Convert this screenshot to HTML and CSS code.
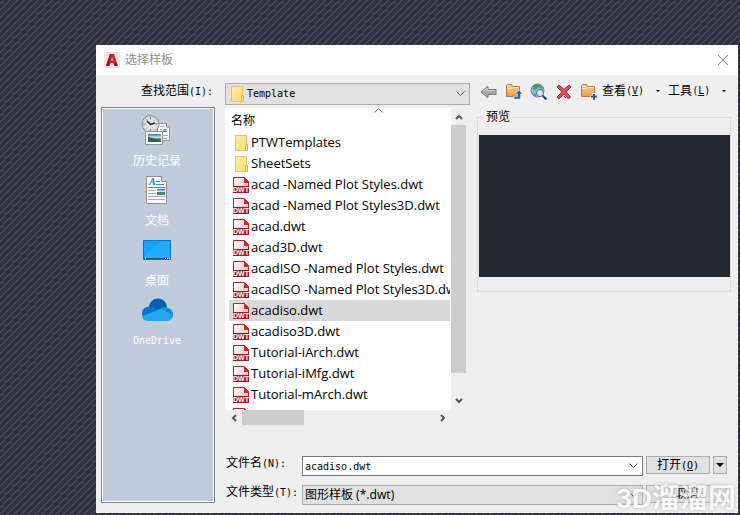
FILE: index.html
```html
<!DOCTYPE html>
<html lang="zh-CN">
<head>
<meta charset="utf-8">
<title>选择样板</title>
<link rel="stylesheet" href="styles.css">
</head>
<body>
<svg class="sprite" aria-hidden="true">
  <defs>
    <linearGradient id="page-red" x1="0" y1="0" x2="1" y2="1"><stop offset="0" stop-color="#fff"/><stop offset="1" stop-color="#f0b4b8"/></linearGradient>
    <linearGradient id="folder-yellow" x1="0" y1="0" x2="1" y2="1"><stop offset="0" stop-color="#ffeda8"/><stop offset="1" stop-color="#fbdc72"/></linearGradient>
    <linearGradient id="folder-orange" x1="0" y1="0" x2="0" y2="1"><stop offset="0" stop-color="#fbd49b"/><stop offset="1" stop-color="#e99a45"/></linearGradient>
    <linearGradient id="photo" x1="0" y1="0" x2="0" y2="1"><stop offset="0" stop-color="#2674c4"/><stop offset=".45" stop-color="#d5ebf5"/><stop offset=".6" stop-color="#47746b"/><stop offset="1" stop-color="#4a83ad"/></linearGradient>
    <symbol id="folder" viewBox="0 0 16 18">
      <path d="M2.500 1.500h11v9h1v6h-12z" fill="url(#folder-yellow)" stroke="#e9c65a"/>
      <path d="M12.500 16.500v-6h2v6z" fill="#ffe793" stroke="#e3b93c"/>
    </symbol>
    <symbol id="dwt" viewBox="0 0 16 16">
      <path d="M.500.500h11l4 4v11h-15z" fill="url(#page-red)" stroke="#a8272e"/>
      <path d="M11 0l5 5v1h-5z" fill="#d4242d"/>
      <path d="M0 9h16v7h-16z" fill="#9f1a22"/>
      <text x="8" y="15" text-anchor="middle" class="dwt-text">DWT</text>
    </symbol>
    <symbol id="folder-open" viewBox="0 0 17 17">
      <path d="M1.500 13.500v-11l1-1h4l1 2h7v10z" fill="url(#folder-orange)" stroke="#b9783a"/>
      <path d="M2 5.500h5l1-1h6" fill="none" stroke="#ffe2b6"/>
    </symbol>
  </defs>
</svg>

<main class="dialog">
  <header class="titlebar">
    <svg class="app-icon" viewBox="0 0 16 16" aria-hidden="true">
      <path d="M0 0h16v16H0z" fill="#f7e2dc"/>
      <path d="M2 14L6 2h4l4 12h-3.500l-1-3H6.500l-1 3z" fill="#c3262e"/>
      <path d="M7.200 8.500L8 5l1 3.500z" fill="#f7e2dc"/>
      <path d="M2 14L6 2h1L5.500 11l-1 3zM10.500 14l-1-3h2l2.500 3z" fill="#8e1820"/>
    </svg>
    <h1>选择样板</h1>
    <button class="close" aria-label="关闭"><svg viewBox="0 0 12 12"><path d="M1 1l10 10M11 1L1 11" stroke="#858585" fill="none"/></svg></button>
  </header>

  <div class="lookup">
    <label class="lookup-label" for="place">查找范围<span class="lat">(I):</span></label>
    <div class="combo folder-combo">
      <svg class="combo-icon"><use href="#folder"/></svg>
      <select id="place"><option>Template</option></select>
      <svg class="chev" viewBox="0 0 9 6"><path d="M.500.500l4 4 4-4" fill="none" stroke="#555"/></svg>
    </div>
    <nav class="tools" aria-label="工具栏">
      <button aria-label="后退"><svg viewBox="0 0 17 17"><path d="M1 9l7-6v3.500h8v5H8V15z" fill="#aaa" stroke="#787878"/><path d="M3 8.500l4-3.500v2.500h8" fill="none" stroke="#d3d3d3"/></svg></button>
      <button aria-label="上一级"><svg viewBox="0 0 17 17"><use href="#folder-open"/><path d="M9 16v-2.500h3.500V11H10l4-4 3.500 4H15.500v5z" fill="#2c5bc2" stroke="#fff" stroke-width=".5"/></svg></button>
      <button aria-label="搜索 Web"><svg viewBox="0 0 17 17"><circle cx="7.500" cy="7.500" r="6.500" fill="#8ab8e8" stroke="#6186c0"/><path d="M3 3q3-3 7-1l1 3-3-1-2 3-3-1zM10 2l3 3-1 2-2-2zM3 10l3 1v3z" fill="#4f9c58"/><circle cx="10" cy="10" r="3.500" fill="#d9ecf9" stroke="#416b9f"/><path d="M12.500 12.500l4 4" stroke="#1c3e78" stroke-width="2"/></svg></button>
      <button aria-label="删除"><svg viewBox="0 0 17 17"><path d="M2 4l2-2 5 4.500L14 2l2 2-5 5 4.500 5-2 2L9 11l-5 5-2-2 5-5z" fill="#d35359" stroke="#a52730"/><path d="M9 13l2 2" stroke="#f0f"/></svg></button>
      <button aria-label="新建文件夹"><svg viewBox="0 0 17 17"><use href="#folder-open"/><path d="M14 10v7M10.500 13.500h7" stroke="#fff" stroke-width="3"/><path d="M14 11v6M11 13.500h6" stroke="#2b55bd" stroke-width="2"/></svg></button>
    </nav>
    <button class="menu">查看<span class="lat">(<u>V</u>)</span><i class="caret"></i></button>
    <button class="menu">工具<span class="lat">(<u>L</u>)</span><i class="caret"></i></button>
  </div>

  <div class="content">
    <nav class="places" aria-label="位置">
      <a href="#history">
        <svg viewBox="0 0 32 32"><path d="M16.500 9.500h9l3 3v14h-12z" fill="#f8fbfc" stroke="#929292"/><path d="M25.500 9v4h3" fill="#ddd" stroke="#888"/><path d="M19 12.500h4M19 15.500h2M19 18.500h2M22 21.500h5M22 24.500h4" stroke="#aaa"/><path d="M22 15h4v3h-4z" fill="url(#photo)"/><circle cx="9.500" cy="10" r="8.500" fill="#d5d7d6" stroke="#8e9293"/><circle cx="9.500" cy="10" r="6.500" fill="#e4e5e3"/><path d="M9.500 3v2M9.500 15v2M2.500 10h2M14.500 10h2M5 5.500l1 1M14 5.500l-1 1M5 14.500l1-1" stroke="#777"/><path d="M6 7l3.500 3.500L14 9" fill="none" stroke="#222" stroke-width="1.500"/><path d="M4.500 17.500h17v13h-17z" fill="#fff" stroke="#949494"/><path d="M7 20h13v8H7z" fill="url(#photo)"/><path d="M7 23l5 1 8 3v1H7z" fill="#36644b"/></svg>
        <span>历史记录</span></a>
      <a href="#documents">
        <svg viewBox="0 0 32 32"><path d="M5.500 2.500h15l5 5v22h-20z" fill="#fafcfc" stroke="#8e9294"/><path d="M20.500 2.500v5h5" fill="#ddd" stroke="#8b8b8b"/><path d="M7 13.500h17M15 7.500h4M15 10.500h8" stroke="#2196d3"/><text x="8" y="11" class="doc-letter">A</text><path d="M7 16.500h8M7 19.500h8M7 22.500h17M7 25.500h17" stroke="#aaa"/><path d="M16 15h8v6h-8z" fill="url(#photo)"/></svg>
        <span>文档</span></a>
      <a href="#desktop">
        <svg viewBox="0 0 32 32"><path d="M2.500 6.500h27v19h-27z" fill="#13a2ff" stroke="#0873b5"/><path d="M3 22L20 7h9v17H3z" fill="#2cb1ff" opacity=".6"/><path d="M3 24.500h26" stroke="#075e9b"/><path d="M4 24.500h1M24 24.500h1M26 24.500h1M28 24.500h1" stroke="#fff"/></svg>
        <span>桌面</span></a>
      <a href="#onedrive">
        <svg viewBox="0 0 32 32"><path d="M8 14a9 9 0 0 1 18-1l-7 7z" fill="#0561b3"/><path d="M3 24a7 7 0 0 1-2-6q1-6 11-5l11 7-10 6z" fill="#0775d1"/><path d="M19 17q3-6 8-3a6.500 6.500 0 0 1 4 10l-13-6z" fill="#168bdc"/><path d="M1 22.500L20 14.500 31.500 21.500A6 6 0 0 1 26 27H8Q2 27 1 22.500z" fill="#28a5e9"/></svg>
        <span class="lat">OneDrive</span></a>
    </nav>

    <div class="workspace">
      <div class="panes">
        <section class="browser" aria-label="文件">
          <div class="files">
            <svg class="sort" viewBox="0 0 9 5"><path d="M.500 4.500l4-4 4 4" fill="none" stroke="#777"/></svg>
            <table>
              <thead><tr><th>名称</th></tr></thead>
              <tbody>
                <tr><td><svg><use href="#folder"/></svg>PTWTemplates</td></tr>
                <tr><td><svg><use href="#folder"/></svg>SheetSets</td></tr>
                <tr><td><svg><use href="#dwt"/></svg>acad -Named Plot Styles.dwt</td></tr>
                <tr><td><svg><use href="#dwt"/></svg>acad -Named Plot Styles3D.dwt</td></tr>
                <tr><td><svg><use href="#dwt"/></svg>acad.dwt</td></tr>
                <tr><td><svg><use href="#dwt"/></svg>acad3D.dwt</td></tr>
                <tr><td><svg><use href="#dwt"/></svg>acadISO -Named Plot Styles.dwt</td></tr>
                <tr><td><svg><use href="#dwt"/></svg>acadISO -Named Plot Styles3D.dwt</td></tr>
                <tr class="selected"><td><svg><use href="#dwt"/></svg>acadiso.dwt</td></tr>
                <tr><td><svg><use href="#dwt"/></svg>acadiso3D.dwt</td></tr>
                <tr><td><svg><use href="#dwt"/></svg>Tutorial-iArch.dwt</td></tr>
                <tr><td><svg><use href="#dwt"/></svg>Tutorial-iMfg.dwt</td></tr>
                <tr><td><svg><use href="#dwt"/></svg>Tutorial-mArch.dwt</td></tr>
                <tr><td><svg><use href="#dwt"/></svg></td></tr>
              </tbody>
            </table>
          </div>
          <div class="vbar">
            <button aria-label="向上滚动"><svg viewBox="0 0 8 6"><path d="M1 5l3-3 3 3" fill="none" stroke="#555" stroke-width="2"/></svg></button>
            <i class="thumb"></i>
            <button aria-label="向下滚动"><svg viewBox="0 0 8 6"><path d="M1 1l3 3 3-3" fill="none" stroke="#555" stroke-width="2"/></svg></button>
          </div>
          <div class="hbar">
            <button aria-label="向左滚动"><svg viewBox="0 0 6 8"><path d="M5 1L2 4l3 3" fill="none" stroke="#555" stroke-width="2"/></svg></button>
            <i class="thumb"></i>
            <button aria-label="向右滚动"><svg viewBox="0 0 6 8"><path d="M1 1l3 3-3 3" fill="none" stroke="#555" stroke-width="2"/></svg></button>
          </div>
        </section>
        <fieldset class="preview">
          <legend>预览</legend>
          <div class="canvas"></div>
        </fieldset>
      </div>

      <form class="fields">
        <label for="name">文件名<span class="lat">(N):</span></label>
        <div class="combo name-combo">
          <input id="name" type="text" value="acadiso.dwt">
          <svg class="chev" viewBox="0 0 9 6"><path d="M.500.500l4 4 4-4" fill="none" stroke="#555"/></svg>
        </div>
        <div class="actions">
          <button type="button" class="push open">打开<span class="lat">(<u>O</u>)</span></button>
          <button type="button" class="push split" aria-label="打开选项"><svg viewBox="0 0 8 4"><path d="M0 0h8L4 4z"/></svg></button>
        </div>
        <label for="type">文件类型<span class="lat">(T):</span></label>
        <div class="combo type-combo">
          <select id="type"><option>图形样板 (*.dwt)</option></select>
          <svg class="chev" viewBox="0 0 9 6"><path d="M.500.500l4 4 4-4" fill="none" stroke="#555"/></svg>
        </div>
        <button type="button" class="push cancel">取消</button>
      </form>
    </div>
  </div>
</main>
<div class="watermark">3D溜溜网</div>
</body>
</html>
```
FILE: styles.css
```css
* { box-sizing: border-box; }

body {
  margin: 0;
  min-height: 100vh;
  padding: 45px 2px 2px 96px;
  background: #2b313f linear-gradient(135deg, transparent 19%, #444a59 19%, #444a59 31%, transparent 31%, transparent 69%, #444a59 69%, #444a59 81%, transparent 81%) 0 0 / 7px 7px;
  color: #000;
  font: 12px/14px "Liberation Sans", "Noto Sans CJK SC", sans-serif;
}

button, input, select { font: inherit; color: inherit; border-radius: 0; margin: 0; }
button { padding: 0; border: 0; background: none; }
svg { display: block; flex: none; }
.sprite { position: absolute; width: 0; height: 0; }
.lat { font-family: "DejaVu Sans Mono", monospace; font-size: 10px; }
.dwt-text { font: bold 7px "Liberation Sans", sans-serif; fill: #fff; }
.doc-letter { font: italic bold 10px "Liberation Serif", serif; fill: #1687c9; }

.dialog { background: #efefef; }

.titlebar { display: flex; align-items: center; height: 30px; padding: 0 9px 0 8px; background: #fff; }
.titlebar h1 { flex: 1; margin: 0 0 0 5px; font-size: 12px; font-weight: 400; color: #8c8c8c; }
.app-icon { width: 16px; height: 16px; }
.close svg { width: 12px; height: 12px; }

.lookup { display: flex; align-items: center; height: 32px; padding-right: 10px; }
.lookup-label { width: 117px; text-align: right; }

.combo { position: relative; display: flex; align-items: center; height: 20px; border: 1px solid #adadad; background: #e1e1e1; }
.combo select, .combo input {
  width: 100%;
  height: 100%;
  padding: 0 20px 0 2px;
  border: 0;
  outline: 0;
  background: transparent;
  appearance: none;
  font-family: "DejaVu Sans Mono", "Noto Sans CJK SC", monospace;
  font-size: 10px;
}
.chev { position: absolute; right: 4px; width: 9px; height: 6px; pointer-events: none; }
.folder-combo { width: 245px; height: 22px; margin: 5px 0 0 12px; }
.combo-icon { width: 16px; height: 18px; margin-left: 3px; }
.name-combo { border-color: #7a7a7a; background: #fff; }
.type-combo select { font-size: 12px; font-family: "Noto Sans", "Noto Sans CJK SC", sans-serif; }

.tools { display: flex; gap: 8px; margin-left: 10px; }
.tools svg { width: 17px; height: 17px; }
.menu { display: flex; align-items: center; white-space: nowrap; margin-left: 5px; }
.menu + .menu { margin-left: 8px; }
.caret { width: 4px; margin-left: 12px; border: 2px solid transparent; border-top-color: #000; border-bottom: 0; }

.content { display: flex; padding: 0 7px 8px 5px; }

.places { width: 114px; margin-bottom: 2px; padding: 4px 2px 0 0; border: 1px solid #7f8791; outline: 1px solid #fff; outline-offset: -2px; background: #bfcddb; }
.places a { display: flex; flex-direction: column; align-items: center; height: 60px; padding-top: 2px; gap: 8px; color: #fff; text-decoration: none; }
.places svg { width: 32px; height: 32px; }

.workspace { flex: 1; min-width: 0; margin-left: 10px; }
.panes { display: flex; gap: 11px; }

.browser { display: grid; grid-template-columns: 226px 15px; grid-template-rows: 302px 15px; flex: none; padding-top: 1px; }
.files { position: relative; overflow: hidden; padding: 1px 1px 0 4px; background: #fff; }
.sort { position: absolute; left: 149px; top: 0; width: 9px; height: 5px; }
.files table { width: 100%; table-layout: fixed; border-collapse: collapse; font: 13px/21px "Open Sans", "Noto Sans CJK SC", sans-serif; }
.files th { height: 23px; padding: 0 2px; text-align: left; font-size: 12px; line-height: 20px; font-weight: 400; }
.files td { display: flex; align-items: center; height: 21px; padding: 0 0 0 4px; gap: 2px; white-space: nowrap; overflow: hidden; }
.files td svg { width: 16px; height: 18px; }
.selected { background: #d9d9d9; }

.vbar { display: flex; flex-direction: column; }
.vbar button { display: grid; place-items: center; height: 17px; }
.vbar svg { width: 8px; height: 6px; }
.vbar .thumb { height: 248px; margin-bottom: 19px; background: #cdcdcd; }
.hbar { display: flex; }
.hbar button { display: grid; place-items: center; width: 17px; }
.hbar svg { width: 6px; height: 8px; }
.hbar .thumb { width: 62px; margin-right: auto; background: #cdcdcd; }

.preview { flex: 1; min-width: 0; align-self: flex-start; margin: 3px 0 0; padding: 11px 0 14px 1px; border: 1px solid #dcdcdc; }
.preview legend { margin-left: 5px; padding: 0 2px; }
.canvas { height: 142px; background: #212830; }

.fields { display: grid; grid-template-columns: 77px 1fr 84px; align-items: start; gap: 9px 0; margin-top: 31px; padding-right: 4px; }
.fields label { padding: 0 1px; white-space: nowrap; }
.actions, .cancel { margin-left: 3px; }
.actions { display: flex; gap: 3px; }
.push { height: 18px; border: 1px solid #adadad; background: #e1e1e1; }
.open { flex: 1; }
.split { display: grid; place-items: center; width: 14px; }
.split svg { width: 8px; height: 4px; }

.watermark {
  position: absolute;
  right: 4px;
  bottom: 1px;
  color: #fff;
  font: bold 28px/30px "Liberation Sans", "Noto Sans CJK SC", sans-serif;
  opacity: .8;
  text-shadow: 0 0 3px #999;
  pointer-events: none;
}
```
